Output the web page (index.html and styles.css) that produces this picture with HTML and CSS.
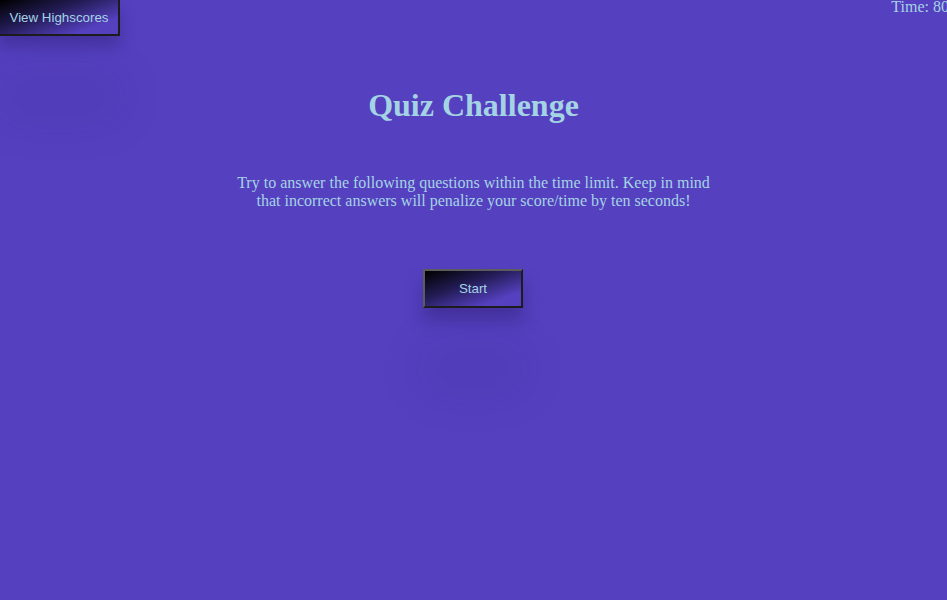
FILE: index.html
```html
<!DOCTYPE html>
<html>
<head>
<meta charset="utf-8">
<link rel="stylesheet" href="styles.css">
</head>
<body>
<header class="topbar">
  <button class="btn btn-scores">View Highscores</button>
  <div class="timer">Time: 80</div>
</header>
<main class="intro">
  <h1 class="title">Quiz Challenge</h1>
  <p class="lead">Try to answer the following questions within the time limit. Keep in mind that incorrect answers will penalize your score/time by ten seconds!</p>
  <button class="btn btn-start">Start</button>
</main>
</body>
</html>
```
FILE: styles.css
```css
html, body {
  margin: 0;
  padding: 0;
  height: 100%;
}
body {
  background: #5540c0;
  color: #a4d4e4;
  font-family: "Liberation Serif", "Times New Roman", serif;
  font-size: 16px;
  overflow: hidden;
}
.topbar {
  display: flex;
  justify-content: space-between;
  align-items: flex-start;
  height: 36px;
}
.btn {
  font-family: "Liberation Sans", Arial, sans-serif;
  font-size: 13.33px;
  color: #a4d4e4;
  background-color: #5540c0;
  background-image: linear-gradient(160deg, #000 0%, #231c55 40%, rgba(85,64,192,0) 80%);
  border-style: solid;
  border-width: 2px;
  border-color: #5c5c5c #1c1c1c #1c1c1c #5c5c5c;
  cursor: pointer;
}
.btn-scores {
  width: 122px;
  height: 38px;
  margin-top: -2px;
  margin-left: -2px;
  padding: 0;
  box-shadow: 0 10px 16px rgba(20,10,60,0.25), 0 80px 50px rgba(30,20,90,0.12);
}
.timer {
  margin-top: -2px;
  line-height: 18px;
  white-space: nowrap;
  margin-right: -2px;
}
.intro {
  display: flex;
  flex-direction: column;
  align-items: center;
  text-align: center;
}
.title {
  margin: 51px 0 0;
  font-size: 32px;
  font-weight: bold;
  line-height: 37px;
}
.lead {
  margin: 50px 0 0;
  max-width: 480px;
  line-height: 18px;
}
.btn-start {
  margin-top: 59px;
  margin-left: -1px;
  width: 100px;
  height: 39px;
  padding: 0;
  box-shadow: 0 12px 18px rgba(20,10,60,0.28), 0 80px 50px rgba(30,20,90,0.12);
}
```
